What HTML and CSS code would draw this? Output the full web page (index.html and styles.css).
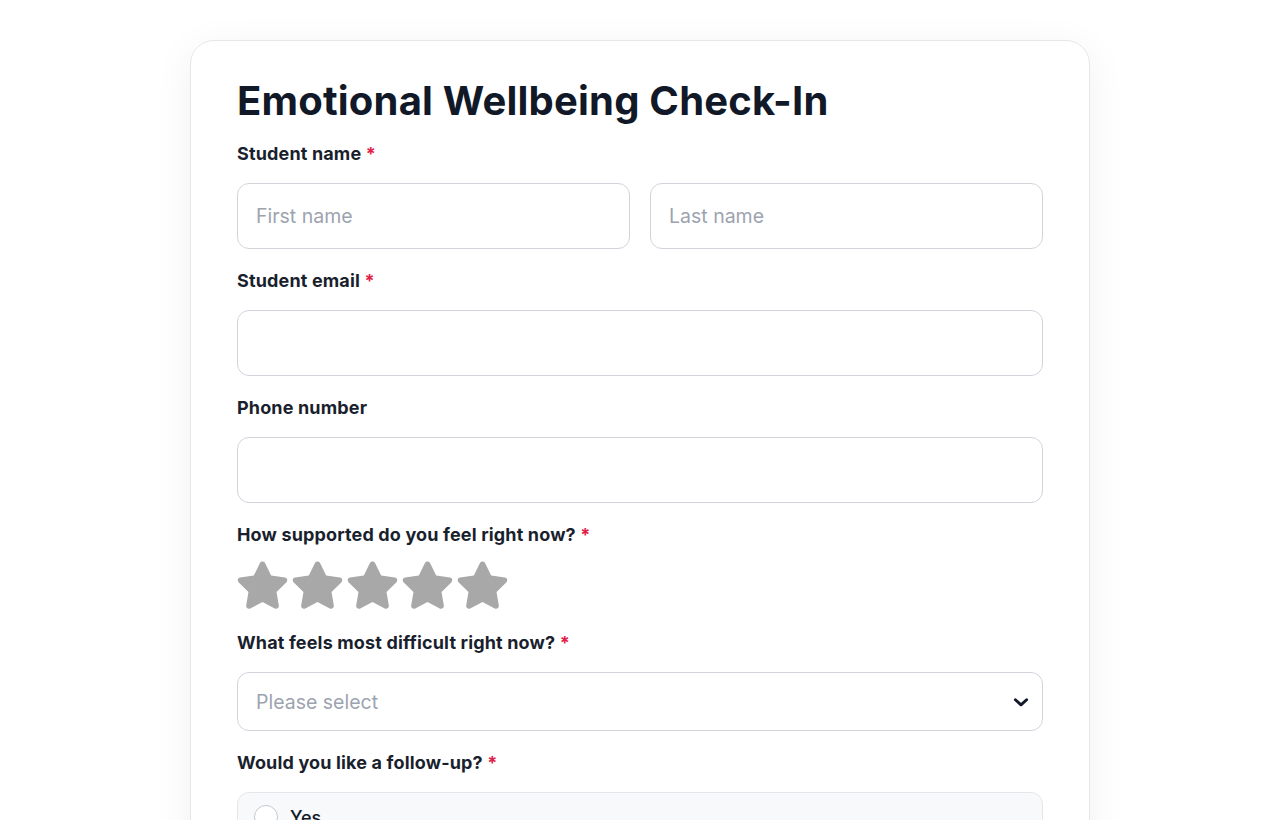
FILE: index.html
```html
<!DOCTYPE html>
<html lang="en">
<head>
    <meta charset="UTF-8">
    <meta name="viewport" content="width=device-width, initial-scale=1.0">
    <title>Emotional Wellbeing Check-In</title>
    <link rel="stylesheet" href="styles.css">
</head>
<body>
    <div class="card">
        <h1 class="title">Emotional Wellbeing Check-In</h1>

        <div class="field">
            <label class="label">Student name <span class="req">*</span></label>
            <div class="row">
                <input class="input" type="text" placeholder="First name">
                <input class="input" type="text" placeholder="Last name">
            </div>
        </div>

        <div class="field">
            <label class="label">Student email <span class="req">*</span></label>
            <input class="input" type="email">
        </div>

        <div class="field">
            <label class="label">Phone number</label>
            <input class="input" type="tel">
        </div>

        <div class="field">
            <label class="label">How supported do you feel right now? <span class="req">*</span></label>
            <div class="stars">
                <svg class="star" viewBox="2 2 20 20"><path d="M12 2.6c.4 0 .8.2 1 .6l2.4 4.9 5.4.8c.9.1 1.2 1.2.6 1.8l-3.9 3.8.9 5.3c.2.9-.8 1.6-1.6 1.2L12 18.5 7.2 21c-.8.4-1.8-.3-1.6-1.2l.9-5.3-3.9-3.8c-.6-.6-.3-1.7.6-1.8l5.4-.8L11 3.2c.2-.4.6-.6 1-.6z"/></svg>
                <svg class="star" viewBox="2 2 20 20"><path d="M12 2.6c.4 0 .8.2 1 .6l2.4 4.9 5.4.8c.9.1 1.2 1.2.6 1.8l-3.9 3.8.9 5.3c.2.9-.8 1.6-1.6 1.2L12 18.5 7.2 21c-.8.4-1.8-.3-1.6-1.2l.9-5.3-3.9-3.8c-.6-.6-.3-1.7.6-1.8l5.4-.8L11 3.2c.2-.4.6-.6 1-.6z"/></svg>
                <svg class="star" viewBox="2 2 20 20"><path d="M12 2.6c.4 0 .8.2 1 .6l2.4 4.9 5.4.8c.9.1 1.2 1.2.6 1.8l-3.9 3.8.9 5.3c.2.9-.8 1.6-1.6 1.2L12 18.5 7.2 21c-.8.4-1.8-.3-1.6-1.2l.9-5.3-3.9-3.8c-.6-.6-.3-1.7.6-1.8l5.4-.8L11 3.2c.2-.4.6-.6 1-.6z"/></svg>
                <svg class="star" viewBox="2 2 20 20"><path d="M12 2.6c.4 0 .8.2 1 .6l2.4 4.9 5.4.8c.9.1 1.2 1.2.6 1.8l-3.9 3.8.9 5.3c.2.9-.8 1.6-1.6 1.2L12 18.5 7.2 21c-.8.4-1.8-.3-1.6-1.2l.9-5.3-3.9-3.8c-.6-.6-.3-1.7.6-1.8l5.4-.8L11 3.2c.2-.4.6-.6 1-.6z"/></svg>
                <svg class="star" viewBox="2 2 20 20"><path d="M12 2.6c.4 0 .8.2 1 .6l2.4 4.9 5.4.8c.9.1 1.2 1.2.6 1.8l-3.9 3.8.9 5.3c.2.9-.8 1.6-1.6 1.2L12 18.5 7.2 21c-.8.4-1.8-.3-1.6-1.2l.9-5.3-3.9-3.8c-.6-.6-.3-1.7.6-1.8l5.4-.8L11 3.2c.2-.4.6-.6 1-.6z"/></svg>
            </div>
        </div>

        <div class="field">
            <label class="label">What feels most difficult right now? <span class="req">*</span></label>
            <div class="select">
                <span class="select-text">Please select</span>
                <svg class="chevron" viewBox="0 0 16 16"><path d="M3 6l5 4.5L13 6" fill="none" stroke="#111827" stroke-width="2.6" stroke-linecap="round" stroke-linejoin="round"/></svg>
            </div>
        </div>

        <div class="field">
            <label class="label">Would you like a follow-up? <span class="req">*</span></label>
            <div class="options">
                <div class="option">
                    <span class="radio"></span>
                    <span>Yes</span>
                </div>
                <div class="option">
                    <span class="radio"></span>
                    <span>No</span>
                </div>
            </div>
        </div>
    </div>
</body>
</html>
```

FILE: styles.css
```css
/* Global */
body {
    margin: 0;
    font-family: Inter, "Noto Sans", sans-serif;
    background: #ffffff;
    color: #111827;
}

/* Card */
.card {
    width: 806px;
    margin: 40px auto 0;
    padding: 36px 46px 40px;
    border: 1px solid #e5e7eb;
    border-radius: 24px;
    background: #ffffff;
    box-shadow: 0 8px 40px rgba(17, 24, 39, 0.06);
}

.title {
    margin: 0 0 17px;
    font-size: 40px;
    line-height: 48px;
    font-weight: 700;
    letter-spacing: 0.2px;
    color: #111827;
}

/* Fields */
.field {
    margin-bottom: 20px;
}

.label {
    display: block;
    margin-bottom: 17px;
    font-size: 18px;
    line-height: 24px;
    font-weight: 700;
    letter-spacing: 0.15px;
    color: #1a1f2e;
}

.req {
    color: #e11d48;
}

.row {
    display: flex;
    gap: 20px;
}

.input {
    box-sizing: border-box;
    width: 100%;
    height: 66px;
    padding: 0 18px;
    border: 1px solid #d1d5db;
    border-radius: 12px;
    font-family: inherit;
    font-size: 19.5px;
    color: #111827;
    outline: none;
}

.input::placeholder {
    color: #9ca3af;
}

/* Stars */
.stars {
    display: flex;
    gap: 4px;
    margin-top: -4px;
}

.star {
    width: 51px;
    height: 51px;
    fill: #a8a8a8;
}

/* Select */
.select {
    box-sizing: border-box;
    display: flex;
    align-items: center;
    justify-content: space-between;
    height: 59px;
    padding: 0 12px 0 18px;
    border: 1px solid #d1d5db;
    border-radius: 12px;
}

.select-text {
    font-size: 19.5px;
    color: #9ca3af;
}

.chevron {
    width: 18px;
    height: 18px;
}

/* Radio options */
.options {
    display: flex;
    flex-direction: column;
    gap: 10px;
}

.option {
    display: flex;
    align-items: center;
    gap: 12px;
    height: 48px;
    padding: 0 16px;
    background: #f8f9fb;
    border: 1px solid #e5e7eb;
    border-radius: 12px;
    font-size: 18px;
    font-weight: 500;
    color: #111827;
}

.radio {
    box-sizing: border-box;
    width: 24px;
    height: 24px;
    border: 1.5px solid #c4c8cf;
    border-radius: 50%;
    background: #ffffff;
}
```
